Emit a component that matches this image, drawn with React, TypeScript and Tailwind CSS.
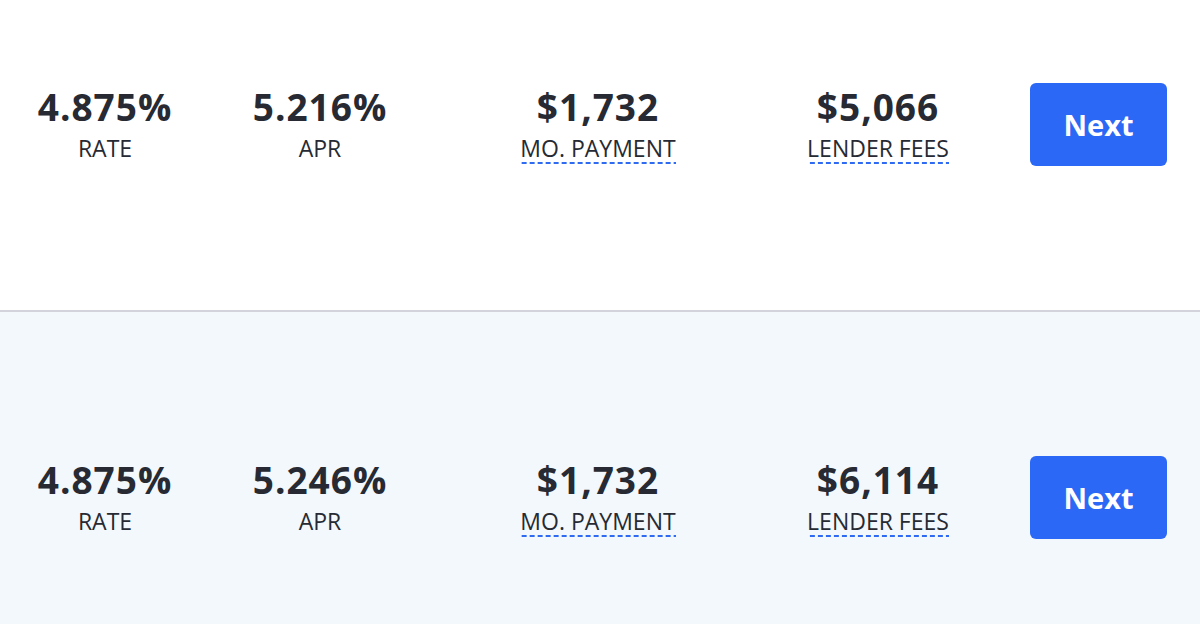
import React from 'react';

type Quote = { rate: string; apr: string; payment: string; fees: string };

const quotes: Quote[] = [
  { rate: '4.875%', apr: '5.216%', payment: '$1,732', fees: '$5,066' },
  { rate: '4.875%', apr: '5.246%', payment: '$1,732', fees: '$6,114' },
];

const Stat: React.FC<{ value: string; label: string; width: string; dashed?: boolean }> = ({ value, label, width, dashed }) => (
  <div className={`${width} mt-[4px] flex flex-col items-center`}>
    <span className="text-[37px] leading-[40px] font-bold text-[#272a32] tracking-[1px]">{value}</span>
    <span
      className={`mt-[7px] text-[23px] leading-[28px] text-[#272a32] ${
        dashed
          ? 'pb-[2px] bg-[linear-gradient(to_right,#2e6bf2_62%,transparent_62%)] bg-[length:8px_2px] bg-repeat-x bg-bottom'
          : ''
      }`}
    >
      {label}
    </span>
  </div>
);

const QuoteRow: React.FC<{ quote: Quote; first?: boolean }> = ({ quote, first }) => (
  <div
    className={`flex items-start ${
      first ? 'bg-white pt-[83px] pb-[144px] border-b-2 border-[#d3d3db]' : 'bg-[#f2f8fc] pt-[144px] pb-[144px]'
    }`}
  >
    <Stat width="w-[210px]" value={quote.rate} label="RATE" />
    <Stat width="w-[220px]" value={quote.apr} label="APR" />
    <Stat width="w-[336px]" value={quote.payment} label="MO. PAYMENT" dashed />
    <Stat width="w-[224px]" value={quote.fees} label="LENDER FEES" dashed />
    <button className="ml-[40px] w-[137px] h-[83px] rounded-[6px] bg-[#2b68f6] text-white text-[29px] font-bold flex items-center justify-center">
      Next
    </button>
  </div>
);

export default function App() {
  return (
    <div className="w-[1200px] h-[624px] overflow-hidden bg-white font-['Open_Sans',sans-serif]">
      {quotes.map((q, i) => (
        <QuoteRow key={i} quote={q} first={i === 0} />
      ))}
    </div>
  );
}
